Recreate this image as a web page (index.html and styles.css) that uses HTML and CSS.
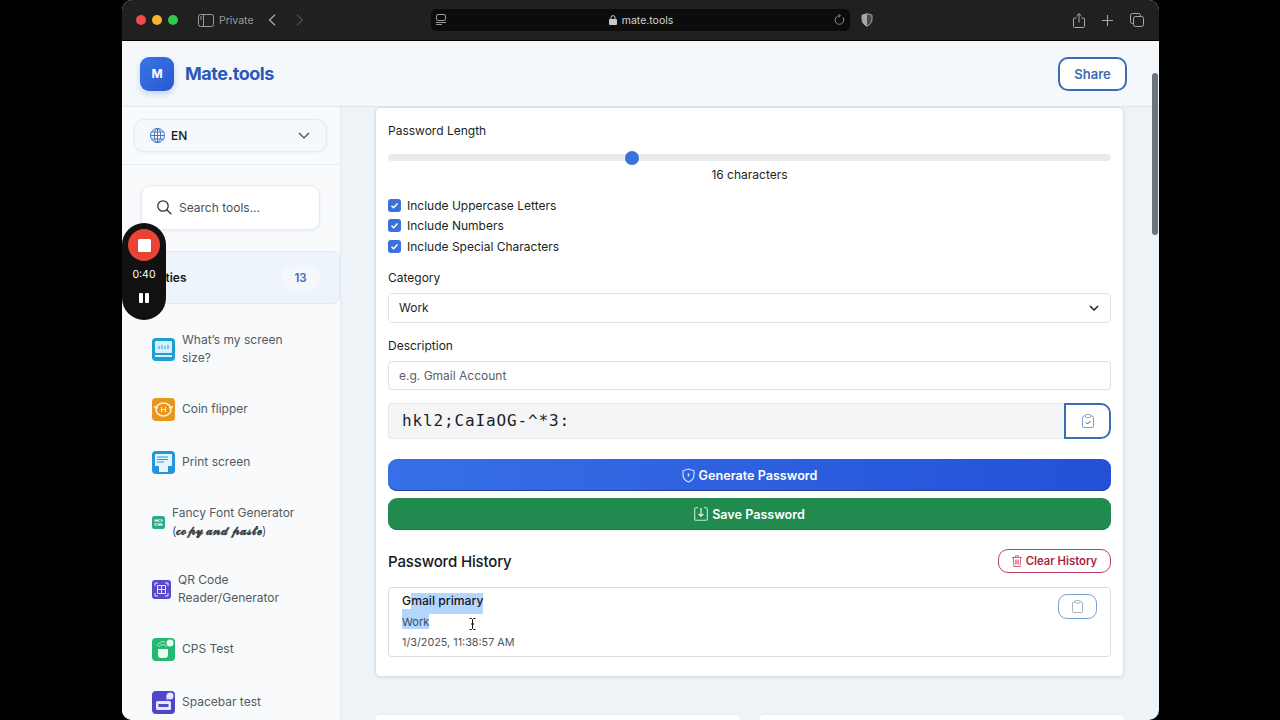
FILE: index.html
```html
<!DOCTYPE html>
<html lang="en">
<head>
<meta charset="utf-8">
<title>Mate.tools</title>
<link rel="stylesheet" href="styles.css">
</head>
<body>
<div class="window">
  <div class="toolbar">
    <div class="lights"><span class="light red"></span><span class="light yellow"></span><span class="light green"></span></div>
    <svg class="tb-sidebar" width="16" height="13" viewBox="0 0 16 13" fill="none" stroke="#9a9a9a" stroke-width="1"><rect x=".5" y=".5" width="15" height="12" rx="2"/><path d="M5.5 .5v12M2 3h2M2 5h2"/></svg>
    <span class="private">Private</span>
    <svg class="tb-back" width="8" height="12" viewBox="0 0 8 12" fill="none" stroke="#a8a8a8" stroke-width="1.3"><path d="M7 .8 1.5 6 7 11.2"/></svg>
    <svg class="tb-fwd" width="8" height="12" viewBox="0 0 8 12" fill="none" stroke="#4c4c4c" stroke-width="1.3"><path d="M1 .8 6.5 6 1 11.2"/></svg>
    <div class="address">
      <svg class="reader" width="10" height="12" viewBox="0 0 10 12" fill="none" stroke="#9a9a9a"><rect x=".5" y=".5" width="9" height="6" rx="1.5"/><path d="M0 8.5h10M0 10.5h6"/></svg>
      <div class="url"><svg width="8" height="10" viewBox="0 0 8 10"><path fill="#c8c8c8" d="M1 4h6a1 1 0 0 1 1 1v4a1 1 0 0 1-1 1H1a1 1 0 0 1-1-1V5a1 1 0 0 1 1-1Z"/><path fill="none" stroke="#c8c8c8" d="M2 4V2.600a2 2 0 0 1 4 0V4"/></svg><span>mate.tools</span></div>
      <svg width="11" height="12" viewBox="0 0 11 12" fill="none" stroke="#8c8c8c"><path d="M8.800 3.300A4.300 4.300 0 1 1 5.500 1.700"/><path d="M4.500 0 6.500 1.700 4.500 3.400"/></svg>
    </div>
    <svg class="tb-shield" width="12" height="14" viewBox="0 0 12 14"><path fill="#4a4a4a" stroke="#a8a8a8" d="M6 .7 11 2.200V6c0 3.500-2 5.800-5 7.300C3 11.800 1 9.500 1 6V2.200Z"/><path fill="#a8a8a8" d="M6 .7 1 2.200V6c0 3.500 2 5.800 5 7.300Z"/></svg>
    <div class="tb-right">
      <svg width="12" height="15" viewBox="0 0 12 15" fill="none" stroke="#a8a8a8"><path d="M3.500 5H1.500a1 1 0 0 0-1 1v7.500a1 1 0 0 0 1 1h9a1 1 0 0 0 1-1V6a1 1 0 0 0-1-1H8.500M6 9.500V.8M3.500 3 6 .7 8.500 3"/></svg>
      <svg width="11" height="11" viewBox="0 0 11 11" stroke="#a8a8a8" stroke-width="1.100"><path d="M5.500 0v11M0 5.500h11"/></svg>
      <svg width="14" height="14" viewBox="0 0 14 14" fill="none" stroke="#a8a8a8"><rect x=".5" y=".5" width="10" height="10" rx="2"/><rect x="3.500" y="3.500" width="10" height="10" rx="2" fill="#202020"/></svg>
    </div>
  </div>

  <header class="site-header">
    <div class="brand"><span class="logo">M</span><span class="brand-name">Mate.tools</span></div>
    <button class="share">Share</button>
  </header>

  <div class="body-row">
    <aside class="sidebar">
      <div class="lang-wrap">
        <div class="lang">
          <svg width="15" height="15" viewBox="0 0 15 15" fill="none" stroke="#3f74c9" stroke-width="1"><circle cx="7.500" cy="7.500" r="7"/><ellipse cx="7.500" cy="7.500" rx="3.200" ry="7"/><path d="M.5 7.500h14M1.500 4h12M1.500 11h12M7.500 .5v14"/></svg>
          <span class="lang-code">EN</span>
          <svg class="lang-arrow" width="12" height="7" viewBox="0 0 12 7" fill="none" stroke="#444" stroke-width="1.200"><path d="M1 1l5 5 5-5"/></svg>
        </div>
      </div>
      <div class="search">
        <svg width="15" height="15" viewBox="0 0 15 15" fill="none" stroke="#333" stroke-width="1.300"><circle cx="6" cy="6" r="5.200"/><path d="M9.800 9.800 14.300 14.300"/></svg>
        <span>Search tools...</span>
      </div>
      <div class="category"><span>Utilities</span><span class="count">13</span></div>
      <ul class="tools">
        <li class="tool">
          <svg class="ic" width="23" height="23" viewBox="0 0 23 23"><rect width="23" height="23" rx="4" fill="#1f9ed1"/><rect x="3" y="3" width="17" height="12" rx="1" fill="#d8f0fa"/><path d="M7 8v3M10 7v4M13 8v3M16 7v4" stroke="#1f9ed1" stroke-width="1"/><rect x="3" y="17" width="17" height="2" fill="#d8f0fa"/></svg>
          <span>What’s my screen size?</span>
        </li>
        <li class="tool">
          <svg class="ic" width="23" height="23" viewBox="0 0 23 23"><rect width="23" height="23" rx="4" fill="#e8961e"/><ellipse cx="11.500" cy="11.500" rx="7.500" ry="6.500" fill="none" stroke="#fff1d6" stroke-width="1.500"/><path d="M2 8.500 6 10M21 8.500 17 10" stroke="#fff1d6" stroke-width="1.500"/><path d="M9.500 9v5M13.500 9v5M9.500 11.500h4" stroke="#fff1d6"/></svg>
          <span>Coin flipper</span>
        </li>
        <li class="tool">
          <svg class="ic" width="23" height="23" viewBox="0 0 23 23"><rect width="23" height="23" rx="4" fill="#2596d8"/><rect x="3" y="3" width="17" height="12" rx="1" fill="#e4f4fc"/><path d="M5 6h11M5 8.500h11M5 11h7" stroke="#2596d8"/><rect x="7" y="15" width="9" height="6" fill="#e4f4fc"/></svg>
          <span>Print screen</span>
        </li>
        <li class="tool">
          <svg class="ic" width="13" height="13" viewBox="0 0 13 13"><rect width="13" height="13" rx="2.500" fill="#2fa98a"/><path d="M2.500 4.500h8M2.500 8.500h8" stroke="#e4f7f1" stroke-width="2"/><path d="M7 4.500h2M4 8.500h2" stroke="#2fa98a"/></svg>
          <span>Fancy Font Generator<br>(<b class="fancy">𝓬𝓸𝓹𝔂 𝓪𝓷𝓭 𝓹𝓪𝓼𝓽𝓮</b>)</span>
        </li>
        <li class="tool">
          <svg class="ic" width="19" height="19" viewBox="0 0 19 19"><rect width="19" height="19" rx="3" fill="#5a49c8"/><path d="M3 6V3h3M13 3h3v3M3 13v3h3M13 16h3v-3" fill="none" stroke="#e6e2fa"/><path d="M5.500 5.500h8v8h-8ZM9.500 5.500v8M5.500 9.500h8" fill="none" stroke="#e6e2fa"/></svg>
          <span>QR Code Reader/Generator</span>
        </li>
        <li class="tool">
          <svg class="ic" width="23" height="23" viewBox="0 0 23 23"><rect width="23" height="23" rx="4" fill="#25b86f"/><path d="M6 11h10v6a3 3 0 0 1-3 3H9a3 3 0 0 1-3-3Z" fill="#eafaf2"/><path d="M7 9a4.500 4.500 0 0 1 8 0M5 8a7 7 0 0 1 8-4" fill="none" stroke="#a7e8c6"/><circle cx="18" cy="5" r="3.500" fill="#eafaf2"/></svg>
          <span>CPS Test</span>
        </li>
        <li class="tool">
          <svg class="ic" width="23" height="23" viewBox="0 0 23 23"><rect width="23" height="23" rx="4" fill="#4f46c8"/><rect x="4" y="10" width="15" height="9" rx="1.500" fill="#e8e6fb"/><rect x="6.500" y="13" width="10" height="3" fill="#4f46c8"/><path d="M15 9V5" stroke="#e8e6fb"/><circle cx="18" cy="5" r="3.500" fill="#e8e6fb"/></svg>
          <span>Spacebar test</span>
        </li>
      </ul>
    </aside>

    <main class="main">
      <section class="card">
        <div class="label">Password Length</div>
        <div class="slider"><span class="thumb"></span></div>
        <div class="len">16 characters</div>
        <div class="checks">
          <div class="check"><svg width="13" height="13" viewBox="0 0 13 13"><rect width="13" height="13" rx="3" fill="#3b71dd"/><path d="M3.500 6.700 5.600 8.700 9.500 4.500" fill="none" stroke="#fff" stroke-width="1.500"/></svg><span>Include Uppercase Letters</span></div>
          <div class="check"><svg width="13" height="13" viewBox="0 0 13 13"><rect width="13" height="13" rx="3" fill="#3b71dd"/><path d="M3.500 6.700 5.600 8.700 9.500 4.500" fill="none" stroke="#fff" stroke-width="1.500"/></svg><span>Include Numbers</span></div>
          <div class="check"><svg width="13" height="13" viewBox="0 0 13 13"><rect width="13" height="13" rx="3" fill="#3b71dd"/><path d="M3.500 6.700 5.600 8.700 9.500 4.500" fill="none" stroke="#fff" stroke-width="1.500"/></svg><span>Include Special Characters</span></div>
        </div>
        <div class="label cat-label">Category</div>
        <div class="field select"><span>Work</span><svg width="10" height="6" viewBox="0 0 10 6" fill="none" stroke="#222" stroke-width="1.500"><path d="M1 1l4 4 4-4"/></svg></div>
        <div class="label desc-label">Description</div>
        <div class="field desc"><span>e.g. Gmail Account</span></div>
        <div class="pw-row">
          <div class="pw">hkl2;CaIaOG-^*3:</div>
          <button class="copy"><svg width="12" height="14" viewBox="0 0 12 14" fill="none" stroke="#7f9fd4"><rect x=".5" y="2" width="11" height="11.500" rx="1.500"/><rect x="3.500" y=".5" width="5" height="3" rx="1" fill="#fff"/><path d="M3.800 8.300 5.500 10 8.300 7" stroke="#555"/></svg></button>
        </div>
        <button class="btn gen"><svg width="13" height="15" viewBox="0 0 13 15" fill="none" stroke="#dbe6fb" stroke-width="1.100"><path d="M6.500 1 12 2.800V7c0 3.400-2.200 5.700-5.500 7C3.200 12.700 1 10.400 1 7V2.800Z"/><path d="M6.500 5.500v3" stroke-width="1.500"/></svg><span>Generate Password</span></button>
        <button class="btn save"><svg width="14" height="14" viewBox="0 0 14 14" fill="none" stroke="#c4ecd3" stroke-width="1.100"><path d="M4 .8H2A1.300 1.300 0 0 0 .7 2v10A1.300 1.300 0 0 0 2 13.300h10a1.300 1.300 0 0 0 1.300-1.300V2A1.300 1.300 0 0 0 12 .8h-2"/><path d="M7 1v8M4.500 6.800 7 9.300 9.500 6.800" stroke="#fff"/></svg><span>Save Password</span></button>
        <div class="hist-head">
          <h2>Password History</h2>
          <button class="clear"><svg width="10" height="12" viewBox="0 0 10 12" fill="none" stroke="#d8607f"><path d="M0 2.500h10M3.500 2.500V.8h3v1.700M1.300 2.500l.6 9h6.200l.6-9M3.700 4.500v5M5 4.500v5M6.300 4.500v5"/></svg><span>Clear History</span></button>
        </div>
        <div class="hist-item">
          <div class="hist-text">
            <div class="hist-name">G<mark class="sel sel-name">mail primary</mark></div>
            <div class="hist-cat"><mark class="sel sel-cat">Work</mark></div>
            <div class="hist-date">1/3/2025, 11:38:57 AM</div>
          </div>
          <button class="hist-copy"><svg width="11" height="13" viewBox="0 0 11 13" fill="none" stroke="#a9b3bf"><rect x=".5" y="1.800" width="10" height="10.700" rx="1"/><rect x="3" y=".5" width="5" height="2.500" rx=".6" fill="#fff"/></svg></button>
          <svg class="ibeam" width="7" height="12" viewBox="0 0 7 12" fill="none" stroke="#111"><path d="M.5 .5h2l1 1 1-1h2M3.500 1.500v9M.5 11.500h2l1-1 1 1h2M2 6h3"/></svg>
        </div>
      </section>
      <div class="lower">
        <section class="mini"></section>
        <section class="mini"></section>
      </div>
    </main>
  </div>

  <div class="scrollbar"></div>
  <div class="recorder">
    <span class="rec-btn"><span class="rec-square"></span></span>
    <span class="rec-time">0:40</span>
    <span class="rec-pause"><i></i><i></i></span>
  </div>
</div>
</body>
</html>
```
FILE: styles.css
```css
* { box-sizing: border-box; }
html, body { height: 100%; }
body {
  margin: 0;
  background: #000;
  overflow: hidden;
  font-family: Inter, "Liberation Sans", sans-serif;
  font-size: 12px;
  color: #1b1f24;
  display: flex;
  justify-content: flex-start;
  padding-left: 122px;
}
button { font-family: inherit; cursor: pointer; }
.window {
  position: relative;
  width: 1037px;
  height: 720px;
  border-radius: 10px;
  overflow: hidden;
  display: flex;
  flex-direction: column;
  background: #eef3f8;
}
.toolbar {
  height: 41px;
  flex: none;
  background: #202020;
  border-bottom: 1px solid #000;
  display: flex;
  align-items: center;
  padding-left: 14px;
  padding-right: 15px;
}
.lights { display: flex; gap: 6px; }
.light { width: 10px; height: 10px; border-radius: 50%; }
.red { background: #ee4b4f; }
.yellow { background: #f5b42f; }
.green { background: #2fc84c; }
.tb-sidebar { margin-left: 20px; }
.private { margin-left: 5px; font-size: 10.500px; color: #9a9a9a; width: 36px; }
.tb-back { margin-left: 13px; }
.tb-fwd { margin-left: 20px; }
.address {
  margin-left: 127px;
  width: 419px;
  height: 22px;
  background: #0c0c0c;
  border-radius: 5px;
  display: flex;
  align-items: center;
  justify-content: space-between;
  padding: 0 5px;
}
.url {
  display: flex;
  align-items: center;
  gap: 5px;
  font-size: 10.500px;
  color: #d6d6d6;
  margin-left: 2px;
}
.tb-shield { margin-left: 11px; }
.tb-right { margin-left: auto; display: flex; align-items: center; gap: 17px; }

.site-header {
  height: 66px;
  flex: none;
  background: #f5f8fb;
  border-bottom: 1px solid #e1e6ec;
  display: flex;
  align-items: center;
  justify-content: space-between;
  padding: 0 32px 0 18px;
}
.brand { display: flex; align-items: center; gap: 11px; }
.logo {
  width: 34px;
  height: 34px;
  border-radius: 9px;
  background: linear-gradient(135deg, #3b74e6, #2a58d0);
  box-shadow: 0 3px 6px rgba(50, 100, 220, .25);
  color: #fff;
  font-weight: 700;
  font-size: 12px;
  display: flex;
  align-items: center;
  justify-content: center;
}
.brand-name { font-size: 18px; font-weight: 700; color: #2a58b8; letter-spacing: -.5px; }
.share {
  width: 69px;
  height: 34px;
  border: 2px solid #3c6db0;
  border-radius: 10px;
  background: #fff;
  color: #3c6db0;
  font-size: 13px;
  font-weight: 600;
  padding: 0;
}

.body-row { flex: 1; display: flex; min-height: 0; }
.sidebar {
  width: 219px;
  flex: none;
  background: #f8fafc;
  border-right: 1px solid #e3eaf2;
  overflow: hidden;
}
.lang-wrap { padding: 12px; border-bottom: 1px solid #e6ecf2; height: 58px; }
.lang {
  height: 33px;
  width: 193px;
  border: 1px solid #e3eaf3;
  border-radius: 10px;
  background: #f5f9fd;
  box-shadow: 0 1px 3px rgba(60, 100, 160, .08);
  display: flex;
  align-items: center;
  padding: 0 16px 0 15px;
  gap: 6px;
}
.lang-code { font-weight: 500; color: #15181c; font-size: 12px; }
.lang-arrow { margin-left: auto; }
.search {
  margin: 20px 0 0 19px;
  width: 179px;
  height: 45px;
  background: #fff;
  border: 1px solid #e2eaf4;
  border-radius: 10px;
  box-shadow: 0 1px 3px rgba(60, 100, 160, .1);
  display: flex;
  align-items: center;
  gap: 7px;
  padding-left: 15px;
  color: #4a5158;
}
.category {
  margin-top: 21px;
  height: 53px;
  background: #eef4fb;
  border: 1px solid #dfe8f3;
  border-radius: 8px;
  display: flex;
  align-items: center;
  justify-content: space-between;
  padding: 0 19px 0 20px;
  font-weight: 600;
  color: #15181c;
}
.count {
  width: 39px;
  height: 24px;
  border-radius: 12px;
  background: #f4f8fc;
  color: #3d6db4;
  font-size: 11.500px;
  display: flex;
  align-items: center;
  justify-content: center;
}
.tools { list-style: none; margin: 11.500px 0 0; padding: 0; }
.tool {
  display: flex;
  align-items: center;
  gap: 7px;
  padding: 15px 30px;
  line-height: 18.600px;
  color: #525a63;
}
.ic { flex: none; }
.fancy { font-weight: 700; color: #3e454d; line-height: 0; }

.main { flex: 1; min-width: 0; padding: 0 35px 0 34px; overflow: hidden; }
.card {
  background: #fff;
  border: 1px solid #d8dfe7;
  border-radius: 5px;
  box-shadow: 0 1px 3px rgba(40, 60, 90, .1);
  padding: 13px 12px 19px;
  height: 570px;
}
.label { line-height: 20px; color: #1b1f24; }
.slider {
  position: relative;
  margin-top: 13px;
  height: 7px;
  border-radius: 4px;
  background: #e8ebee;
}
.thumb {
  position: absolute;
  left: 33.700%;
  top: -3.500px;
  margin-left: -7px;
  width: 14px;
  height: 14px;
  border-radius: 50%;
  background: #3b71dd;
}
.len { margin-top: 4px; line-height: 20px; text-align: center; }
.checks { margin-top: 10px; display: flex; flex-direction: column; }
.check { display: flex; align-items: center; gap: 6px; height: 20.500px; }
.cat-label { margin-top: 11px; }
.desc-label { margin-top: 13px; }
.field {
  margin-top: 5px;
  height: 30px;
  border: 1px solid #dde1e6;
  border-radius: 4px;
  background: #fff;
  display: flex;
  align-items: center;
  justify-content: space-between;
  padding: 0 11px 0 10px;
}
.desc { height: 29px; }
.desc span { color: #5a6168; }
.pw-row { margin-top: 13px; height: 36px; display: flex; }
.pw {
  flex: 1;
  background: #f3f5f7;
  border: 1px solid #e4e7ea;
  border-right: 0;
  border-radius: 4px 0 0 4px;
  font-family: "DejaVu Sans Mono", "Liberation Mono", monospace;
  font-size: 16px;
  letter-spacing: .87px;
  display: flex;
  align-items: center;
  padding: 0 0 0 13px;
}
.copy {
  width: 47px;
  border: 2px solid #3c6db0;
  border-radius: 0 10px 10px 0;
  background: #fff;
  display: flex;
  align-items: center;
  justify-content: center;
  padding: 0;
}
.btn {
  width: 100%;
  height: 32px;
  border: 0;
  border-radius: 9px;
  color: #fff;
  font-size: 12.600px;
  font-weight: 600;
  display: flex;
  align-items: center;
  justify-content: center;
  gap: 4px;
  padding: 1px 0 0;
}
.gen { margin-top: 20px; background: linear-gradient(90deg, #3770e6, #2450d8); box-shadow: inset 0 -1px 0 #2143a8; }
.save { margin-top: 7px; background: #218a4e; box-shadow: inset 0 -1px 0 #1b7a44; }
.hist-head {
  margin-top: 19px;
  height: 24px;
  display: flex;
  align-items: center;
  justify-content: space-between;
}
.hist-head h2 { margin: 0; padding-top: 2px; font-size: 15px; font-weight: 500; letter-spacing: -.15px; color: #15181c; }
.clear {
  width: 113px;
  height: 24px;
  border: 1px solid #b9415f;
  border-radius: 10px;
  background: #fff;
  color: #ab1f45;
  font-size: 11.300px;
  font-weight: 600;
  display: flex;
  align-items: center;
  justify-content: center;
  gap: 4px;
  padding: 0;
}
.hist-item {
  position: relative;
  margin-top: 14px;
  height: 70px;
  border: 1px solid #d9dde2;
  border-radius: 4px;
  display: flex;
  justify-content: space-between;
  padding: 5px 13px 0;
}
.hist-text { display: flex; flex-direction: column; }
.hist-name { height: 21px; line-height: 16px; font-weight: 500; color: #15181c; font-size: 12.200px; }
.sel { background: #b4d5fe; color: inherit; display: inline-block; vertical-align: top; }
.sel-name { line-height: 16px; padding-bottom: 5px; }
.sel-cat { line-height: 14px; padding-top: 6px; }
.hist-cat { height: 20px; font-size: 11px; color: #3a4a5c; margin-top: -5px; }
.hist-date { font-size: 10.800px; color: #4e555c; line-height: 20px; margin-top: 4px; }
.hist-copy {
  width: 39px;
  height: 25px;
  margin-top: 1px;
  margin-right: 0;
  border: 1.500px solid #7d9fcb;
  border-radius: 9px;
  background: #fff;
  display: flex;
  align-items: center;
  justify-content: center;
  padding: 0;
}
.ibeam { position: absolute; left: 80px; top: 30px; }
.lower { margin-top: 38px; display: grid; grid-template-columns: 365px 365px; column-gap: 19px; }
.mini { height: 200px; background: #fff; border-radius: 5px; box-shadow: 0 1px 3px rgba(40, 60, 90, .1); }

.scrollbar {
  position: absolute;
  right: 1px;
  top: 73px;
  width: 6px;
  height: 162px;
  border-radius: 3px;
  background: #6d7378;
}
.recorder {
  position: absolute;
  left: 0;
  top: 223px;
  width: 44px;
  height: 97px;
  border-radius: 22px;
  background: #111;
  display: flex;
  flex-direction: column;
  align-items: center;
  padding-top: 6px;
  color: #fff;
}
.rec-btn {
  flex: none;
  width: 32px;
  height: 32px;
  border-radius: 50%;
  background: #ea4335;
  display: flex;
  align-items: center;
  justify-content: center;
}
.rec-square { width: 13px; height: 13px; background: #fff; border-radius: 1.500px; }
.rec-time { margin-top: 7px; font-size: 10.500px; line-height: 14px; }
.rec-pause { margin-top: 11px; display: flex; gap: 2.500px; }
.rec-pause i { width: 3.500px; height: 10px; border-radius: 1px; background: #fff; }
```
